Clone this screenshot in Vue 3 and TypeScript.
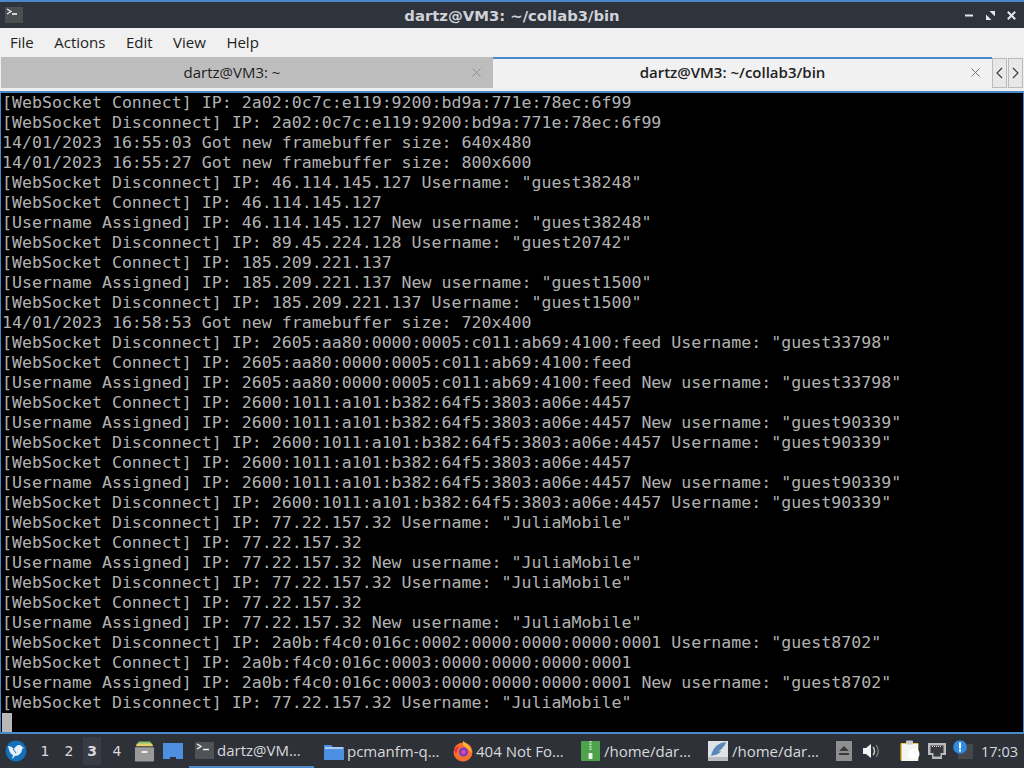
<script setup lang="ts">
const menus: string[] = ['File', 'Actions', 'Edit', 'View', 'Help']
const lines: string[] = [
  '[WebSocket Connect] IP: 2a02:0c7c:e119:9200:bd9a:771e:78ec:6f99',
  '[WebSocket Disconnect] IP: 2a02:0c7c:e119:9200:bd9a:771e:78ec:6f99',
  '14/01/2023 16:55:03 Got new framebuffer size: 640x480',
  '14/01/2023 16:55:27 Got new framebuffer size: 800x600',
  '[WebSocket Disconnect] IP: 46.114.145.127 Username: "guest38248"',
  '[WebSocket Connect] IP: 46.114.145.127',
  '[Username Assigned] IP: 46.114.145.127 New username: "guest38248"',
  '[WebSocket Disconnect] IP: 89.45.224.128 Username: "guest20742"',
  '[WebSocket Connect] IP: 185.209.221.137',
  '[Username Assigned] IP: 185.209.221.137 New username: "guest1500"',
  '[WebSocket Disconnect] IP: 185.209.221.137 Username: "guest1500"',
  '14/01/2023 16:58:53 Got new framebuffer size: 720x400',
  '[WebSocket Disconnect] IP: 2605:aa80:0000:0005:c011:ab69:4100:feed Username: "guest33798"',
  '[WebSocket Connect] IP: 2605:aa80:0000:0005:c011:ab69:4100:feed',
  '[Username Assigned] IP: 2605:aa80:0000:0005:c011:ab69:4100:feed New username: "guest33798"',
  '[WebSocket Connect] IP: 2600:1011:a101:b382:64f5:3803:a06e:4457',
  '[Username Assigned] IP: 2600:1011:a101:b382:64f5:3803:a06e:4457 New username: "guest90339"',
  '[WebSocket Disconnect] IP: 2600:1011:a101:b382:64f5:3803:a06e:4457 Username: "guest90339"',
  '[WebSocket Connect] IP: 2600:1011:a101:b382:64f5:3803:a06e:4457',
  '[Username Assigned] IP: 2600:1011:a101:b382:64f5:3803:a06e:4457 New username: "guest90339"',
  '[WebSocket Disconnect] IP: 2600:1011:a101:b382:64f5:3803:a06e:4457 Username: "guest90339"',
  '[WebSocket Disconnect] IP: 77.22.157.32 Username: "JuliaMobile"',
  '[WebSocket Connect] IP: 77.22.157.32',
  '[Username Assigned] IP: 77.22.157.32 New username: "JuliaMobile"',
  '[WebSocket Disconnect] IP: 77.22.157.32 Username: "JuliaMobile"',
  '[WebSocket Connect] IP: 77.22.157.32',
  '[Username Assigned] IP: 77.22.157.32 New username: "JuliaMobile"',
  '[WebSocket Disconnect] IP: 2a0b:f4c0:016c:0002:0000:0000:0000:0001 Username: "guest8702"',
  '[WebSocket Connect] IP: 2a0b:f4c0:016c:0003:0000:0000:0000:0001',
  '[Username Assigned] IP: 2a0b:f4c0:016c:0003:0000:0000:0000:0001 New username: "guest8702"',
  '[WebSocket Disconnect] IP: 77.22.157.32 Username: "JuliaMobile"'
]
</script>

<template>
  <div class="screen">
    <header class="titlebar">
      <div class="app-icon">
        <svg width="18" height="16" viewBox="0 0 18 16">
          <rect width="18" height="16" fill="#4c4f52" />
          <path d="M2 2l4 2.500-4 2.500" fill="none" stroke="#e8e8e8" stroke-width="1.400" />
          <path d="M7 7h5" stroke="#f4f4f4" stroke-width="1.600" />
        </svg>
      </div>
      <div class="title">dartz@VM3: ~/collab3/bin</div>
      <div class="win-btns">
        <svg width="9" height="9" viewBox="0 0 9 9"><path d="M0 4.500h8" stroke="#e4e6ea" stroke-width="2" /></svg>
        <svg width="9" height="9" viewBox="0 0 9 9"><path d="M0 9V3.500L5.500 9zM9 0v5.500L3.500 0z" fill="#e4e6ea" /></svg>
        <svg width="9" height="9" viewBox="0 0 9 9"><path d="M.8.800l7.400 7.400M8.200.800L.8 8.200" stroke="#e4e6ea" stroke-width="2" /></svg>
      </div>
    </header>

    <nav class="menubar">
      <span v-for="m in menus" :key="m" class="menu">{{ m }}</span>
    </nav>

    <div class="tabbar">
      <div class="tab inactive">
        <span class="tab-label">dartz@VM3: ~</span>
        <svg class="tab-x" width="9" height="9" viewBox="0 0 9 9"><path d="M.5.500l8 8M8.500.500l-8 8" stroke="#8f8f8f" stroke-width="1" /></svg>
      </div>
      <div class="tab active">
        <span class="tab-label">dartz@VM3: ~/collab3/bin</span>
        <svg class="tab-x" width="9" height="9" viewBox="0 0 9 9"><path d="M.5.500l8 8M8.500.500l-8 8" stroke="#777" stroke-width="1" /></svg>
      </div>
      <div class="scroll-btns">
        <span class="sbtn"><svg width="7" height="12" viewBox="0 0 7 12"><path d="M6 1L1 6l5 5" fill="none" stroke="#333" stroke-width="1.100" /></svg></span>
        <span class="sbtn"><svg width="7" height="12" viewBox="0 0 7 12"><path d="M1 1l5 5-5 5" fill="none" stroke="#333" stroke-width="1.100" /></svg></span>
      </div>
    </div>

    <main class="terminal">
      <div v-for="(l, i) in lines" :key="i" class="line">{{ l }}</div>
      <div class="cursor"></div>
    </main>

    <footer class="panel">
      <svg class="logo" width="22" height="22" viewBox="0 0 22 22">
        <circle cx="11" cy="11" r="10.500" fill="#1470b8" />
        <path d="M3 6c2 0 4 1 6 3 1-2 3-4 5-4 2 0 3 1 3 2l2 1-2 1c0 4-3 7-7 7l-3 3 1-4C5 14 4 10 3 6z" fill="#e4f0fa" />
        <path d="M8 9l3 4" stroke="#1470b8" stroke-width="1" />
      </svg>
      <div class="desks">
        <span class="desk">1</span>
        <span class="desk">2</span>
        <span class="desk current">3</span>
        <span class="desk">4</span>
      </div>
      <svg class="ql-file" width="21" height="21" viewBox="0 0 22 21">
        <path d="M3 4L5 0h12l2 4z" fill="#7cc47a" />
        <path d="M2 5l1-3h16l1 3z" fill="#e6d267" />
        <rect x="1" y="6" width="20" height="15" rx="1" fill="#9a9a9a" />
        <rect x="8" y="10" width="6" height="2" fill="#f4f4f4" />
      </svg>
      <svg class="ql-desk" width="20" height="16" viewBox="0 0 20 16">
        <path d="M0 0h20v16h-7v-2H7v2H0z" fill="#4d8fe0" />
      </svg>
      <div class="task current-task task-term">
        <svg width="19" height="17" viewBox="0 0 19 17">
          <rect width="19" height="17" rx="1" fill="#505356" />
          <path d="M2 2l4 2.500-4 2.500" fill="none" stroke="#eee" stroke-width="1.400" />
          <path d="M8 7.500h6" stroke="#eee" stroke-width="1.500" />
        </svg>
        <span>dartz@VM…</span>
      </div>
      <div class="task task-pc">
        <svg width="20" height="17" viewBox="0 0 20 17">
          <path d="M0 2h7l2 2h11v13H0z" fill="#4d8fe0" />
          <rect x="1" y="4" width="18" height="2" fill="#a8cdf4" />
        </svg>
        <span>pcmanfm-q…</span>
      </div>
      <div class="task task-ff">
        <svg width="22" height="22" viewBox="0 0 22 22">
          <circle cx="11" cy="12" r="9.500" fill="#f3702e" />
          <path d="M11 1c3 2 7 5 8 9l1 3-5-5-4-3z" fill="#fdb73a" />
          <path d="M2 10c2-3 3-3 5-4L4 14z" fill="#e8353f" />
          <circle cx="11.500" cy="12" r="4.500" fill="#7a3bc4" />
          <circle cx="11.500" cy="12" r="2.200" fill="#d84ba0" />
        </svg>
        <span>404 Not Fo…</span>
      </div>
      <div class="task task-zip">
        <svg width="19" height="20" viewBox="0 0 19 20">
          <rect width="19" height="20" rx="1" fill="#4ca34a" />
          <path d="M9.500 0v10" stroke="#cfe8cf" stroke-width="2" stroke-dasharray="1.500 1" />
          <rect x="7.500" y="12" width="4" height="6" rx="1" fill="#eef6ee" />
        </svg>
        <span>/home/dar…</span>
      </div>
      <div class="task task-fea">
        <svg width="20" height="20" viewBox="0 0 20 20">
          <rect width="20" height="20" fill="#dfe2e6" />
          <rect y="16" width="20" height="4" fill="#b9bbbe" />
          <path d="M18 1C10 2 5 6 3 15c3-1 8-1 10-5l-3 .5C13 9 17 5 18 1z" fill="#5a86b8" />
        </svg>
        <span>/home/dar…</span>
      </div>
      <div class="eject">
        <svg width="16" height="20" viewBox="0 0 16 20">
          <rect width="16" height="20" fill="#8f8f8f" />
          <path d="M3 10l5-5 5 5zM3 12h10v2H3z" fill="#3a3a3a" />
        </svg>
      </div>
      <svg class="vol" width="17" height="16" viewBox="0 0 17 16">
        <path d="M0 5h3l5-4v14l-5-4H0z" fill="#f2f2f2" />
        <path d="M10 4c2 2 2 6 0 8" fill="none" stroke="#c9c9c9" stroke-width="1.500" />
        <path d="M13 2c3 3 3 9 0 12" fill="none" stroke="#777" stroke-width="1.500" />
      </svg>
      <svg class="clip" width="20" height="22" viewBox="0 0 20 22">
        <rect x="0.500" y="3" width="18" height="18" rx="1" fill="#e6c94a" />
        <rect x="2" y="4" width="16" height="17" fill="#f5f5f0" />
        <rect x="6" y="0.500" width="7" height="4" rx="1" fill="#c9c9c9" />
        <circle cx="14" cy="14" r="5.500" fill="#fff" />
      </svg>
      <svg class="net" width="20" height="18" viewBox="0 0 20 18">
        <path d="M1 1h18v12h-4v4H5v-4H1z" fill="#b9b9b9" />
        <path d="M3.500 3.500h13v7.500h-3v3.500h-7V11h-3z" fill="#37393c" />
        <path d="M5 4.500h10" stroke="#ddd" stroke-width="1" stroke-dasharray="1 1" />
      </svg>
      <div class="notify">
        <span class="notif-bg"></span>
        <svg class="notif-dot" width="14" height="14" viewBox="0 0 14 14">
          <circle cx="7" cy="7" r="6.800" fill="#2f8be0" />
          <rect x="6" y="2.500" width="2" height="6" fill="#fff" />
          <rect x="6" y="9.500" width="2" height="2" fill="#fff" />
        </svg>
      </div>
      <span class="clock">17:03</span>
    </footer>
  </div>
</template>

<style>
html, body { margin: 0; background: #000; }
</style>

<style scoped>
.screen {
  width: 1024px;
  height: 768px;
  overflow: hidden;
  display: flex;
  flex-direction: column;
  font-family: "Open Sans", "Noto Sans", sans-serif;
  background: #2e3138;
}
.titlebar {
  height: 26px;
  border-top: 2px solid #4a88c9;
  background: #2f343c;
  display: flex;
  align-items: center;
  position: relative;
  flex: none;
}
.app-icon { margin-left: 5px; display: flex; }
.title {
  position: absolute;
  left: 0;
  right: 0;
  text-align: center;
  font-family: "DejaVu Sans", sans-serif;
  font-size: 14.800px;
  font-weight: 700;
  color: #cfd3d8;
}
.win-btns {
  margin-left: auto;
  margin-right: 8px;
  display: flex;
  gap: 12px;
  align-items: center;
}
.menubar {
  height: 29px;
  box-sizing: border-box;
  padding: 0 0 2px 10px;
  flex: none;
  background: #f0f0f0;
  display: flex;
  align-items: center;
  gap: 20.500px;
  font-size: 15px;
  color: #222;
}
.tabbar {
  height: 34px;
  flex: none;
  background: #eeeeee;
  display: flex;
}
.tab {
  box-sizing: border-box;
  display: flex;
  align-items: center;
  justify-content: center;
  position: relative;
  font-size: 15px;
  color: #222;
}
.tab-x { position: absolute; top: 11px; }
.inactive {
  width: 492px;
  margin-left: 1px;
  background: #bdbdbd;
  height: 31px;
  padding: 0 30px 2px 0;
}
.inactive .tab-x { right: 12px; }
.active {
  width: 499px;
  height: 31px;
  border-top: 2px solid #4a88c9;
  background: #f1f1f1;
  font-weight: 600;
  padding: 0 20px 3px 0;
}
.active .tab-x { right: 12px; top: 9px; }
.scroll-btns { display: flex; margin-top: 1px; height: 30px; gap: 1px; }
.sbtn {
  width: 15px;
  box-sizing: border-box;
  border: 1px solid #bcbcbc;
  background: #e8e8e8;
  display: flex;
  align-items: center;
  justify-content: center;
}
.terminal {
  flex: none;
  height: 641px;
  box-sizing: border-box;
  background: #000;
  border: 1px solid #4a88c9;
  border-top-width: 2px;
  border-bottom: 0;
  padding-left: 1px;
  color: #b2b2b2;
  font-family: "DejaVu Sans Mono", monospace;
  font-size: 16.600px;
  line-height: 20px;
  white-space: pre;
  overflow: hidden;
}
.line { height: 20px; }
.cursor { width: 10px; height: 20px; background: #b8b8b8; }
.panel {
  flex: 1;
  border-top: 2px solid #4a88c9;
  background: #2e3138;
  display: flex;
  align-items: center;
  position: relative;
  color: #d8dadd;
  font-size: 15px;
}
.logo { margin-left: 5px; flex: none; }
.desks { display: flex; align-items: center; margin-left: 6px; }
.desk {
  width: 24px;
  height: 28px;
  line-height: 28px;
  text-align: center;
  font-family: "DejaVu Sans", sans-serif;
  font-size: 14px;
}
.current {
  width: 18px;
  margin: 0 4px 0 2px;
  background: #383c44;
  font-weight: 700;
}
.ql-file { margin-left: 5px; flex: none; }
.ql-desk { margin-left: 8px; flex: none; }
.task {
  height: 100%;
  box-sizing: border-box;
  display: flex;
  align-items: center;
  flex: none;
  white-space: nowrap;
}
.task-term { margin-left: 6px; width: 125px; padding-left: 6px; gap: 3px; }
.current-task { border-bottom: 2px solid #4a88c9; }
.task-pc { width: 128px; margin-left: 10px; gap: 3px; }
.task-ff { width: 129px; gap: 2px; }
.task-zip { width: 127px; gap: 4px; }
.task-fea { width: 128px; gap: 4px; }
.eject { display: flex; }
.vol { margin-left: 11px; flex: none; }
.clip { margin-left: 20px; flex: none; }
.net { margin-left: 7px; flex: none; }
.notify { width: 20px; height: 16px; margin-left: 6px; position: relative; flex: none; }
.notif-bg { position: absolute; left: 5px; top: 1px; width: 15px; height: 15px; background: #45474a; }
.notif-dot { position: absolute; left: 0; top: -3px; }
.clock { margin-left: auto; margin-right: 6px; font-size: 14.500px; }
</style>
